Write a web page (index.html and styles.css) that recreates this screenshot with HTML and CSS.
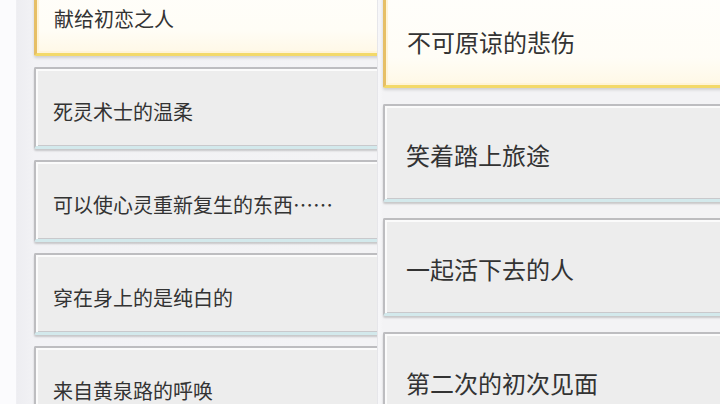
FILE: index.html
```html
<!DOCTYPE html>
<html lang="zh-CN">
<head>
<meta charset="utf-8">
<title>章节列表</title>
<link rel="stylesheet" href="styles.css">
</head>
<body>
<div class="screen">
  <div class="edge"></div>
  <section class="list list-left">
    <div class="card card-active">献给初恋之人</div>
    <div class="card">死灵术士的温柔</div>
    <div class="card">可以使心灵重新复生的东西……</div>
    <div class="card">穿在身上的是纯白的</div>
    <div class="card">来自黄泉路的呼唤</div>
  </section>
  <section class="list list-right">
    <div class="card card-active">不可原谅的悲伤</div>
    <div class="card">笑着踏上旅途</div>
    <div class="card">一起活下去的人</div>
    <div class="card">第二次的初次见面</div>
  </section>
</div>
</body>
</html>
```
FILE: styles.css
```css
html, body {
  margin: 0;
  padding: 0;
  background: #f4f4f6;
}

.screen {
  width: 720px;
  height: 404px;
  overflow: hidden;
  display: flex;
  font-family: "Noto Sans CJK SC", "Noto Sans", sans-serif;
  color: #333333;
  background: #f3f3f5;
}

/* pale margin strip on the far left */
.edge {
  width: 16px;
  flex: none;
  background: #fbfbfd;
  border-right: 1px solid #efeff3;
}

.list {
  display: flex;
  flex-direction: column;
  overflow: hidden;
  flex: none;
  height: 404px;
}

.list-left {
  width: 343px;
  padding-left: 17px;
  gap: 11px;
  background: linear-gradient(90deg, #ededf1 0, #f2f2f5 17px, #f3f3f5 100%);
}

.list-right {
  width: 337px;
  padding-left: 5px;
  gap: 16px;
  border-left: 1px solid #e6e6ea;
  background: linear-gradient(90deg, #f7f7f9 0, #f3f3f5 5px);
}

.card {
  flex: none;
  box-sizing: border-box;
  display: flex;
  align-items: center;
  white-space: nowrap;
  background: #ededed;
  border: 2px solid #bdbdc0;
  border-bottom: 3px solid #d3e9ec;
  box-shadow: inset 2px 2px 0 #fbfbfb, inset -1px -1px 0 #c9c9cc, 0 2px 2px rgba(0, 0, 0, 0.18);
  border-radius: 2px;
}

.list-left .card {
  width: 380px;
  height: 82px;
  padding: 7px 0 0 17px;
  font-size: 20px;
}

.list-left .card:first-child {
  margin-top: -26px;
}

.list-right .card {
  width: 380px;
  height: 98px;
  padding: 4px 0 0 21px;
  font-size: 24px;
}

.list-right .card:first-child {
  margin-top: -10px;
}

.card-active {
  background: linear-gradient(180deg, #fffefb 0%, #fffdf6 70%, #fff8e6 100%);
  border: 3px solid #e6bf66;
  border-bottom: 3px solid #f3d96a;
  box-shadow: inset 0 0 0 2px #fff4d8, 0 2px 3px rgba(0, 0, 0, 0.14);
}
```
